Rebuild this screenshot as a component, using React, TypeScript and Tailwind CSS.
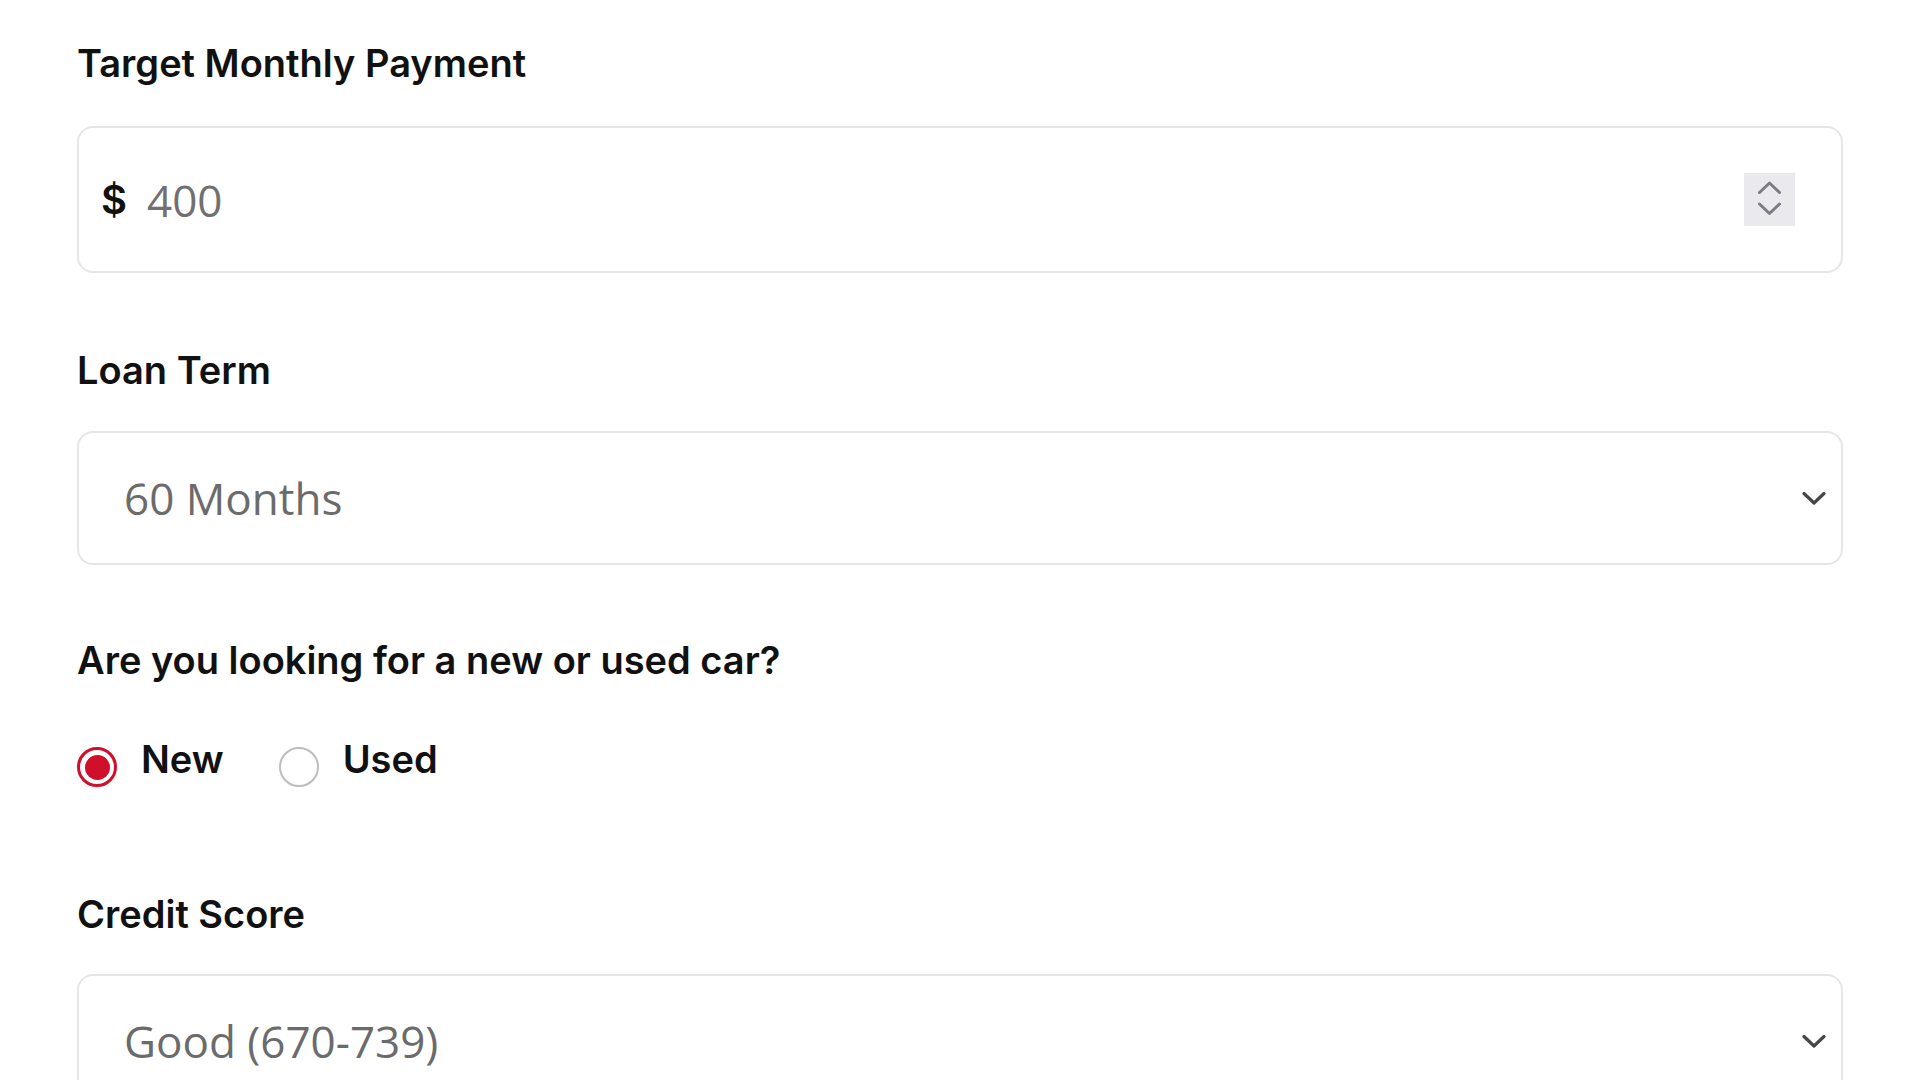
import { useState } from "react";

const labelFont = { fontFamily: "Inter, 'Liberation Sans', sans-serif" };
const valueFont = { fontFamily: "'Open Sans', 'Noto Sans', sans-serif" };

const FieldLabel = ({ children, className = "" }: { children: React.ReactNode; className?: string }) => (
  <p style={labelFont} className={`text-[38px] leading-[46px] font-semibold text-[#111111] ${className}`}>
    {children}
  </p>
);

const SelectBox = ({ value }: { value: string }) => (
  <div className="flex h-[134px] w-full items-center justify-between rounded-[16px] border-2 border-[#e6e6e6] bg-white pl-[45px] pr-[15px]">
    <span style={valueFont} className="text-[44px] leading-none text-[#6b6b6b]">
      {value}
    </span>
    <svg width="24" height="15" viewBox="0 0 24 15" fill="none">
      <path d="M2 2.5L12 12L22 2.5" stroke="#474747" strokeWidth="3.2" strokeLinecap="round" strokeLinejoin="round" />
    </svg>
  </div>
);

const Radio = ({ label, checked, onClick }: { label: string; checked: boolean; onClick: () => void }) => (
  <button type="button" onClick={onClick} className="flex items-start gap-[24px]">
    {checked ? (
      <span className="mt-[10px] flex h-[40px] w-[40px] items-center justify-center rounded-full border-[3px] border-[#d0102b] bg-white">
        <span className="h-[25px] w-[25px] rounded-full bg-[#d0102b]" />
      </span>
    ) : (
      <span className="mt-[10px] h-[40px] w-[40px] rounded-full border-2 border-[#bdbdbd] bg-white" />
    )}
    <span style={labelFont} className="text-[38px] leading-[44px] font-semibold text-[#111111]">
      {label}
    </span>
  </button>
);

export default function App() {
  const [condition, setCondition] = useState<"new" | "used">("new");

  return (
    <div className="h-[1080px] w-full overflow-hidden bg-white px-[77px]">
      <FieldLabel className="pt-[40px]">Target Monthly Payment</FieldLabel>
      <div className="mt-[40px] flex h-[147px] w-full items-center rounded-[16px] border-2 border-[#e6e6e6] bg-white pl-[22px] pr-[46px]">
        <span style={labelFont} className="text-[40px] leading-none font-semibold text-[#111111]">
          $
        </span>
        <span style={valueFont} className="ml-[20px] text-[44px] leading-none text-[#707070]">
          400
        </span>
        <div className="ml-auto flex h-[53px] w-[51px] items-center justify-center bg-[#e9e9ee]">
          <svg width="51" height="53" viewBox="0 0 51 53" fill="none">
            <path d="M15.5 19.5L25.5 10L35.5 19.5" stroke="#7b7b86" strokeWidth="3" strokeLinecap="round" strokeLinejoin="round" />
            <path d="M15.5 31L25.5 40.5L35.5 31" stroke="#7b7b86" strokeWidth="3" strokeLinecap="round" strokeLinejoin="round" />
          </svg>
        </div>
      </div>

      <FieldLabel className="mt-[74px]">Loan Term</FieldLabel>
      <div className="mt-[38px]">
        <SelectBox value="60 Months" />
      </div>

      <FieldLabel className="mt-[72px]">Are you looking for a new or used car?</FieldLabel>
      <div className="mt-[54px] flex items-start gap-[55px]">
        <Radio label="New" checked={condition === "new"} onClick={() => setCondition("new")} />
        <Radio label="Used" checked={condition === "used"} onClick={() => setCondition("used")} />
      </div>

      <FieldLabel className="mt-[104px]">Credit Score</FieldLabel>
      <div className="mt-[37px]">
        <SelectBox value="Good (670-739)" />
      </div>
    </div>
  );
}
